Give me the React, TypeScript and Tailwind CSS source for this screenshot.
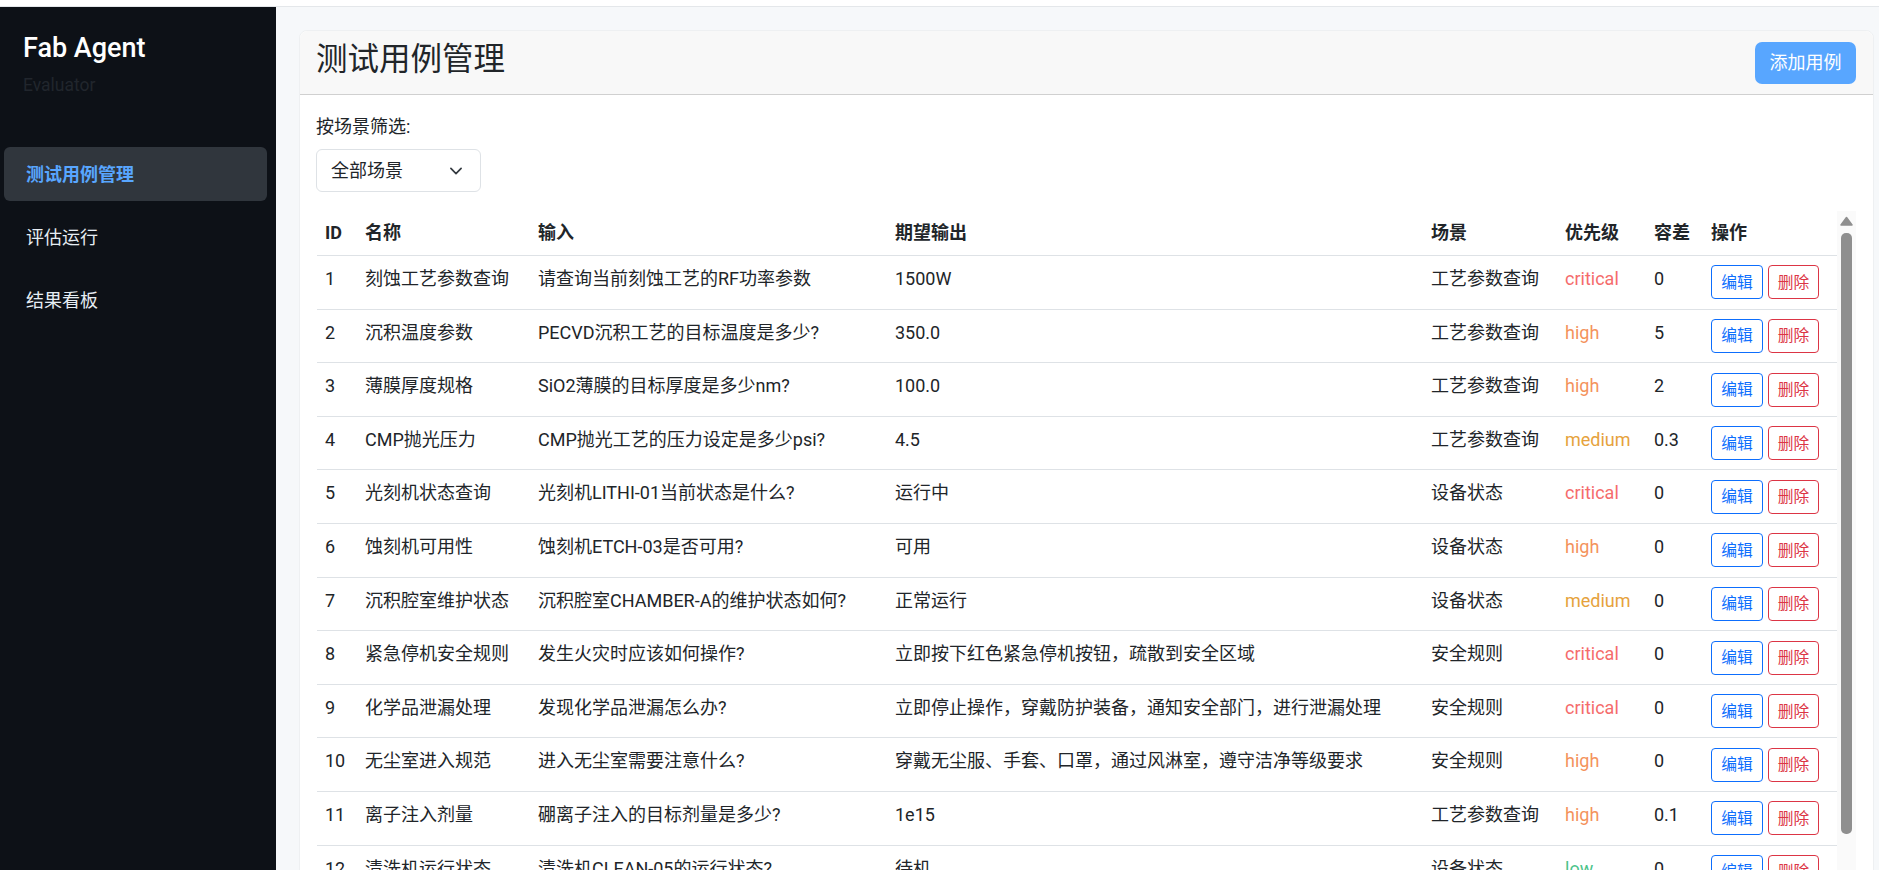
const rows = [
  ["1","刻蚀工艺参数查询","请查询当前刻蚀工艺的RF功率参数","1500W","工艺参数查询","critical","0"],
  ["2","沉积温度参数","PECVD沉积工艺的目标温度是多少?","350.0","工艺参数查询","high","5"],
  ["3","薄膜厚度规格","SiO2薄膜的目标厚度是多少nm?","100.0","工艺参数查询","high","2"],
  ["4","CMP抛光压力","CMP抛光工艺的压力设定是多少psi?","4.5","工艺参数查询","medium","0.3"],
  ["5","光刻机状态查询","光刻机LITHI-01当前状态是什么?","运行中","设备状态","critical","0"],
  ["6","蚀刻机可用性","蚀刻机ETCH-03是否可用?","可用","设备状态","high","0"],
  ["7","沉积腔室维护状态","沉积腔室CHAMBER-A的维护状态如何?","正常运行","设备状态","medium","0"],
  ["8","紧急停机安全规则","发生火灾时应该如何操作?","立即按下红色紧急停机按钮，疏散到安全区域","安全规则","critical","0"],
  ["9","化学品泄漏处理","发现化学品泄漏怎么办?","立即停止操作，穿戴防护装备，通知安全部门，进行泄漏处理","安全规则","critical","0"],
  ["10","无尘室进入规范","进入无尘室需要注意什么?","穿戴无尘服、手套、口罩，通过风淋室，遵守洁净等级要求","安全规则","high","0"],
  ["11","离子注入剂量","硼离子注入的目标剂量是多少?","1e15","工艺参数查询","high","0.1"],
  ["12","清洗机运行状态","清洗机CLEAN-05的运行状态?","待机","设备状态","low","0"],
];

const prio: Record<string, string> = {
  critical: "text-[#f56c6c]",
  high: "text-[#f4935c]",
  medium: "text-[#e6a23c]",
  low: "text-[#4cc38a]",
};

const td = "px-[8px] pb-0 pt-[9px] align-top leading-[27px]";

export default function App() {
  return (
    <div
      className="h-[870px] w-[1879px] overflow-hidden bg-white text-[18px] leading-[27px] text-[#212529]"
      style={{ fontFamily: 'Roboto,"Noto Sans CJK SC",sans-serif' }}
    >
      <div className="h-[7px] border-b border-[#e4e7ea] bg-white" />
      <div className="flex h-[863px]">
        <aside className="flex w-[276px] shrink-0 flex-col bg-[#0d1117]">
          <div className="pl-[23px] pt-[23px]">
            <div className="text-[27px] font-medium leading-[36px] text-white">Fab Agent</div>
            <div className="mt-[7px] text-[17.5px] leading-[24px] text-[#21262d]">Evaluator</div>
          </div>
          <nav className="mt-[50px] flex flex-col gap-[9px] px-[4px]">
            <div className="flex h-[54px] w-[263px] items-center rounded-[6px] bg-[#30363d] pl-[22px] font-semibold text-[#58a6ff]">测试用例管理</div>
            <div className="flex h-[54px] items-center pl-[22px] text-[#e6edf3]">评估运行</div>
            <div className="flex h-[54px] items-center pl-[22px] text-[#e6edf3]">结果看板</div>
          </nav>
        </aside>
        <main className="relative min-w-0 flex-1 bg-[#f6f8fa] pl-[23px] pr-[5px] pt-[23px]">
          <section className="h-[900px] rounded-[8px] border border-[#eef0f2] bg-white">
            <header className="flex h-[64px] items-center justify-between rounded-t-[8px] border-b border-[#d0d0d0] bg-[#f8f8f8] pl-[16px] pr-[17px]">
              <h1 className="mt-[-6px] text-[31.5px] font-normal leading-[48px]">测试用例管理</h1>
              <button className="h-[42px] w-[101px] rounded-[7px] bg-[#58a6ff] text-white">添加用例</button>
            </header>
            <div className="px-[16px] pt-[18px]">
              <label className="block leading-[27px]">按场景筛选:</label>
              <div className="mt-[9px] flex h-[43px] w-[165px] items-center justify-between rounded-[6px] border border-[#dee2e6] pl-[14px] pr-[16px]">
                <span>全部场景</span>
                <svg width="16" height="16" viewBox="0 0 16 16" fill="none" stroke="#343a40" strokeWidth="2" strokeLinecap="round" strokeLinejoin="round"><path d="m2 5 6 6 6-6" transform="translate(1.2 1.2) scale(.85)" /></svg>
              </div>
              <table className="ml-[1px] mt-[18.6px] w-[1520px] table-fixed border-collapse">
                <colgroup>
                  <col className="w-[40px]" />
                  <col className="w-[173px]" />
                  <col className="w-[357px]" />
                  <col className="w-[536px]" />
                  <col className="w-[134px]" />
                  <col className="w-[89px]" />
                  <col className="w-[57px]" />
                  <col className="w-[134px]" />
                </colgroup>
                <thead>
                  <tr className="h-[45px] border-b border-[#dee2e6] text-left font-bold">
                    {["ID","名称","输入","期望输出","场景","优先级","容差","操作"].map((h) => (
                      <th key={h} className="px-[8px] py-0 font-bold">{h}</th>
                    ))}
                  </tr>
                </thead>
                <tbody>
                  {rows.map((r) => (
                    <tr key={r[0]} className="h-[53.6px] border-b border-[#dee2e6]">
                      <td className={td}>{r[0]}</td>
                      <td className={td}>{r[1]}</td>
                      <td className={td}>{r[2]}</td>
                      <td className={td}>{r[3]}</td>
                      <td className={td}>{r[4]}</td>
                      <td className={`${td} ${prio[r[5]]}`}>{r[5]}</td>
                      <td className={td}>{r[6]}</td>
                      <td className="px-[8px] py-0 align-middle">
                        <div className="flex gap-[5px]">
                          <button className="h-[34px] w-[52px] rounded-[4px] border border-[#0d6efd] text-[15.75px] text-[#0d6efd]">编辑</button>
                          <button className="h-[34px] w-[51px] rounded-[4px] border border-[#dc3545] text-[15.75px] text-[#dc3545]">删除</button>
                        </div>
                      </td>
                    </tr>
                  ))}
                </tbody>
              </table>
            </div>
          </section>
          <div className="absolute left-[1561px] top-[204px] h-[660px] w-[19px] bg-[#fafafa]">
            <svg className="absolute left-[3px] top-[5px]" width="13" height="10" viewBox="0 0 13 10"><path d="M6.5 1.5 12 9H1Z" fill="#8f8f8f" stroke="#8f8f8f" strokeWidth="1.5" strokeLinejoin="round" /></svg>
            <div className="absolute left-[4px] top-[22px] h-[601px] w-[11px] rounded-[5px] bg-[#8f8f8f]" />
          </div>
        </main>
      </div>
    </div>
  );
}
